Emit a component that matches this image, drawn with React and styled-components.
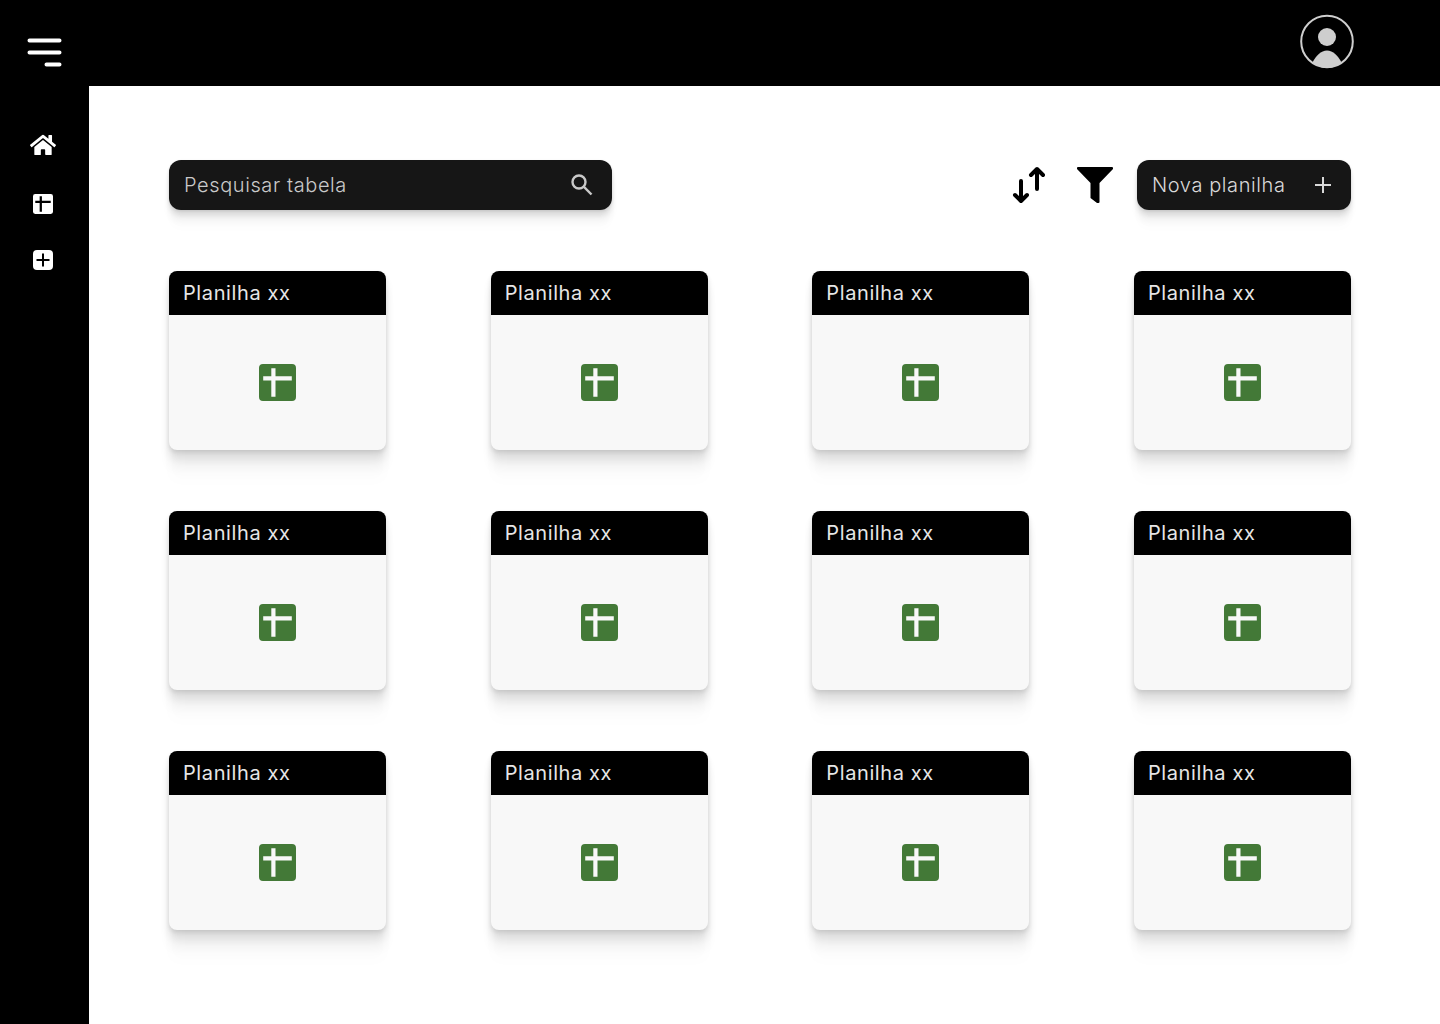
import React from "react";
import styled, { createGlobalStyle } from "styled-components";
import { FaHome } from "react-icons/fa";

const GlobalStyle = createGlobalStyle`
  *, *::before, *::after { box-sizing: border-box; }
  body {
    margin: 0;
    background: #fff;
    font-family: Inter, "Liberation Sans", sans-serif;
    font-size: 20px;
    line-height: 24px;
    letter-spacing: 0.03em;
  }
  button, input { font: inherit; letter-spacing: inherit; }
  svg { display: block; overflow: visible; }
`;

const Page = styled.div`
  display: grid;
  grid-template-columns: 89px 1fr;
  min-height: 100vh;
`;

const Sidebar = styled.aside`
  display: flex;
  flex-direction: column;
  align-items: center;
  padding: 34px 3px 0 0;
  background: #000;
`;

const Nav = styled.nav`
  display: flex;
  flex-direction: column;
  align-items: center;
  gap: 32px;
  margin-top: 62px;
`;

const NavLink = styled.a`
  display: grid;
  place-items: center;
  width: 40px;
  height: 24px;
  color: #fff;

  &:first-child { margin-bottom: 4px; }
`;

const IconButton = styled.button`
  display: grid;
  place-items: center;
  padding: 0;
  border: 0;
  background: none;
  color: ${({ $color }) => $color || "#000"};
  cursor: pointer;
`;

const Content = styled.div`
  display: flex;
  flex-direction: column;
`;

const Header = styled.header`
  display: flex;
  align-items: center;
  justify-content: flex-end;
  height: 86px;
  padding: 0 85px 2px 0;
  background: #000;
`;

const Main = styled.main`
  display: flex;
  flex-direction: column;
  gap: 61px;
  padding: 74px 89px 74px 80px;
`;

const Toolbar = styled.div`
  display: flex;
  align-items: center;
  justify-content: space-between;
  gap: 24px;
`;

const Tools = styled.div`
  display: flex;
  align-items: center;
  gap: 24px;
`;

const ToolIcons = styled.div`
  display: flex;
  gap: 30px;
`;

const toolShadow = `
  0 1px 3px rgba(0, 0, 0, 0.1),
  0 5px 5px rgba(0, 0, 0, 0.09),
  0 11px 7px rgba(0, 0, 0, 0.05),
  0 19px 8px rgba(0, 0, 0, 0.01)
`;

const SearchBox = styled.label`
  display: flex;
  align-items: center;
  flex: 0 1 443px;
  height: 50px;
  padding: 0 18px 0 15px;
  border-radius: 12px;
  background: #161616;
  color: #c9c9c9;
  box-shadow: ${toolShadow};
`;

const SearchInput = styled.input`
  flex: 1;
  min-width: 0;
  padding: 0;
  border: 0;
  outline: 0;
  background: none;
  color: inherit;
  font-weight: 300;
  &::placeholder { color: #c9c9c9; opacity: 1; }
`;

const NewButton = styled.button`
  display: flex;
  align-items: center;
  justify-content: space-between;
  width: 214px;
  height: 50px;
  padding: 0 16px 0 15px;
  border: 0;
  border-radius: 12px;
  background: #161616;
  color: #d9d9d9;
  font-weight: 300;
  box-shadow: ${toolShadow};
  cursor: pointer;
`;

const Grid = styled.div`
  display: grid;
  grid-template-columns: repeat(auto-fill, 217px);
  justify-content: space-between;
  gap: 61px;
`;

const Card = styled.a`
  display: block;
  overflow: hidden;
  border-radius: 8px;
  background: #f8f8f8;
  text-decoration: none;
  box-shadow:
    0 2px 4px rgba(0, 0, 0, 0.1),
    0 8px 8px rgba(0, 0, 0, 0.09),
    0 18px 11px rgba(0, 0, 0, 0.05),
    0 32px 13px rgba(0, 0, 0, 0.01);
`;

const CardTitle = styled.h2`
  margin: 0;
  padding: 10px 14px;
  background: #000;
  color: #e6e6e6;
  font-size: 20px;
  font-weight: 400;
`;

const CardBody = styled.div`
  display: grid;
  place-items: center;
  height: 135px;
  color: #437937;
`;

const MenuIcon = () => (
  <svg width="36" height="36" viewBox="0 0 36 36" fill="none" stroke="currentColor" strokeWidth="4" strokeLinecap="round" aria-hidden="true">
    <path d="M4.500 6.500h30M4.500 18.500h30M21.500 30.500h13" />
  </svg>
);

const TableIcon = ({ size }) => (
  <svg width={size} height={size} viewBox="0 0 37 37" fill="currentColor" aria-hidden="true">
    <path fillRule="evenodd" d="M4 0H33Q37 0 37 4V33Q37 37 33 37H4Q0 37 0 33V4Q0 0 4 0ZM12.300 4.200V12.300H4.200V16.500H12.300V32.800H16.500V16.500H32.800V12.300H16.500V4.200Z" />
  </svg>
);

const AddBoxIcon = () => (
  <svg width="20" height="20" viewBox="0 0 20 20" aria-hidden="true">
    <rect width="20" height="20" rx="4" fill="currentColor" />
    <path d="M10 3.500v13M3.500 10h13" stroke="#000" strokeWidth="2" />
  </svg>
);

const AvatarIcon = () => (
  <svg width="56" height="56" viewBox="0 0 56 56" fill="currentColor" aria-hidden="true">
    <circle cx="28" cy="27.500" r="25.800" fill="none" stroke="currentColor" strokeWidth="2" />
    <circle cx="28" cy="23" r="9" />
    <path d="M13.500 48.500C17 41.500 22 36.500 28 36.500S39 41.500 42.500 48.500C38 52 33 54 28 54S18 52 13.500 48.500Z" />
  </svg>
);

const SearchIcon = () => (
  <svg width="24" height="24" viewBox="0 0 24 24" fill="none" stroke="currentColor" strokeWidth="2.400" aria-hidden="true">
    <circle cx="9" cy="9" r="6.500" />
    <path d="M13.700 13.700L21.500 21.500" />
  </svg>
);

const SortIcon = () => (
  <svg width="36" height="36" viewBox="0 0 36 36" fill="none" stroke="currentColor" strokeWidth="4" strokeLinecap="round" strokeLinejoin="round" aria-hidden="true">
    <path d="M10 14v19M4 28l6 6 6-6M26 22V3M20 8l6-6 6 6" />
  </svg>
);

const FilterIcon = () => (
  <svg width="36" height="36" viewBox="0 0 36 36" fill="currentColor" aria-hidden="true">
    <path d="M1 0H35Q36 0 36 1V2L22.500 16V35Q22.500 36 21.500 36H20L13.500 31V16L0 2V1Q0 0 1 0Z" />
  </svg>
);

const PlusIcon = () => (
  <svg width="24" height="24" viewBox="0 0 24 24" stroke="currentColor" strokeWidth="2" aria-hidden="true">
    <path d="M12 4v16M4 12h16" />
  </svg>
);

const sheets = Array.from({ length: 12 }, (_, i) => ({ id: i + 1, title: "Planilha xx" }));

export default function App() {
  return (
    <>
      <GlobalStyle />
      <Page>
        <Sidebar>
          <IconButton $color="#fff" aria-label="Menu"><MenuIcon /></IconButton>
          <Nav>
            <NavLink href="#inicio" aria-label="Início"><FaHome size={26} /></NavLink>
            <NavLink href="#planilhas" aria-label="Planilhas"><TableIcon size={20} /></NavLink>
            <NavLink href="#nova" aria-label="Nova planilha"><AddBoxIcon /></NavLink>
          </Nav>
        </Sidebar>
        <Content>
          <Header>
            <IconButton $color="#cecece" aria-label="Perfil"><AvatarIcon /></IconButton>
          </Header>
          <Main>
            <Toolbar>
              <SearchBox>
                <SearchInput type="text" placeholder="Pesquisar tabela" aria-label="Pesquisar tabela" />
                <SearchIcon />
              </SearchBox>
              <Tools>
                <ToolIcons>
                  <IconButton aria-label="Ordenar"><SortIcon /></IconButton>
                  <IconButton aria-label="Filtrar"><FilterIcon /></IconButton>
                </ToolIcons>
                <NewButton>Nova planilha<PlusIcon /></NewButton>
              </Tools>
            </Toolbar>
            <Grid>
              {sheets.map(({ id, title }) => (
                <Card key={id} href={`#planilha-${id}`}>
                  <CardTitle>{title}</CardTitle>
                  <CardBody><TableIcon size={37} /></CardBody>
                </Card>
              ))}
            </Grid>
          </Main>
        </Content>
      </Page>
    </>
  );
}
